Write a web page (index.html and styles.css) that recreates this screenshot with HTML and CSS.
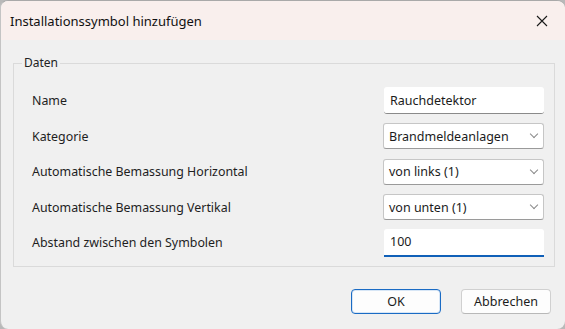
FILE: index.html
```html
<!DOCTYPE html>
<html lang="de">
<head>
  <meta charset="UTF-8">
  <title>Installationssymbol hinzufügen</title>
  <link rel="stylesheet" href="styles.css">
</head>
<body>
  <div class="dialog">
    <div class="titlebar">
      <span class="title">Installationssymbol hinzufügen</span>
      <button class="close" aria-label="Schließen">
        <svg width="12" height="12" viewBox="0 0 12 12">
          <path d="M1 1 L11 11 M11 1 L1 11" stroke="#1a1a1a" stroke-width="1.1" fill="none"/>
        </svg>
      </button>
    </div>

    <div class="content">
      <fieldset class="group">
        <legend>Daten</legend>

        <div class="row">
          <label for="name">Name</label>
          <input id="name" class="text" type="text" value="Rauchdetektor">
        </div>

        <div class="row">
          <label>Kategorie</label>
          <div class="select"><span>Brandmeldeanlagen</span><i class="chev"></i></div>
        </div>

        <div class="row">
          <label>Automatische Bemassung Horizontal</label>
          <div class="select"><span>von links (1)</span><i class="chev"></i></div>
        </div>

        <div class="row">
          <label>Automatische Bemassung Vertikal</label>
          <div class="select"><span>von unten (1)</span><i class="chev"></i></div>
        </div>

        <div class="row">
          <label for="abstand">Abstand zwischen den Symbolen</label>
          <input id="abstand" class="text focused" type="text" value="100">
        </div>
      </fieldset>

      <div class="buttons">
        <button class="btn primary">OK</button>
        <button class="btn">Abbrechen</button>
      </div>
    </div>
  </div>
</body>
</html>
```

FILE: styles.css
```css
* {
  margin: 0;
  padding: 0;
  box-sizing: border-box;
}

html, body {
  width: 565px;
  height: 329px;
  overflow: hidden;
}

body {
  background: #b9b9b9;
  font-family: "Noto Sans", "Open Sans", sans-serif;
  font-size: 12.4px;
  color: #1b1b1b;
}

.dialog {
  width: 565px;
  height: 329px;
  background: #f0f0f0;
  border-top: 1px solid #a9a9a9;
  border-left: 1px solid #c4c4c4;
  border-radius: 8px;
  overflow: hidden;
}

.titlebar {
  height: 39px;
  background: #f9efed;
  display: flex;
  align-items: center;
  justify-content: space-between;
  padding-left: 9px;
}

.title {
  font-size: 13px;
  color: #111;
}

.close {
  width: 46px;
  height: 39px;
  border: none;
  background: transparent;
  display: flex;
  align-items: center;
  justify-content: center;
}

.content {
  padding: 15px 10px 0 12px;
}

.group {
  border: 1px solid #dadada;
  padding: 16px 10px 10px 8px;
}

.group legend {
  padding: 0 2px;
  line-height: 16px;
  font-size: 12px;
  color: #222;
}

.row {
  display: flex;
  align-items: center;
  justify-content: space-between;
  height: 27px;
  margin-bottom: 8.5px;
  padding-left: 10px;
}

.row:last-child {
  margin-bottom: 0;
}

.row label {
  color: #1e1e1e;
}

.text {
  width: 160px;
  height: 27px;
  border: none;
  border-bottom: 1px solid #8a8a8a;
  border-radius: 3px;
  background: #fff;
  font: inherit;
  font-size: 12.5px;
  color: #1b1b1b;
  padding: 0 6px;
  outline: none;
}

.text.focused {
  height: 28px;
  border-bottom: 2px solid #1060b8;
  border-radius: 3px 3px 0 0;
}

.select {
  width: 161px;
  height: 26px;
  background: #fff;
  border: 1px solid #c6c6c6;
  border-bottom-color: #9a9a9a;
  border-radius: 3px;
  display: flex;
  align-items: center;
  justify-content: space-between;
  padding: 0 6px 0 5px;
  font-size: 12.5px;
}

.chev {
  width: 6px;
  height: 6px;
  border-right: 1px solid #8a8a8a;
  border-bottom: 1px solid #8a8a8a;
  transform: rotate(45deg);
  margin-top: -4px;
}

.buttons {
  display: flex;
  justify-content: flex-end;
  gap: 20px;
  margin-top: 22px;
  padding-right: 4px;
}

.btn {
  width: 90px;
  height: 25px;
  background: #fdfdfd;
  border: 1px solid #d0d0d0;
  border-bottom-color: #b8b8b8;
  border-radius: 4px;
  font: inherit;
  font-size: 12.5px;
  color: #1b1b1b;
}

.btn.primary {
  border: 1px solid #1a6bc4;
  box-shadow: inset 0 0 0 1px #d7e6f6;
}
```
